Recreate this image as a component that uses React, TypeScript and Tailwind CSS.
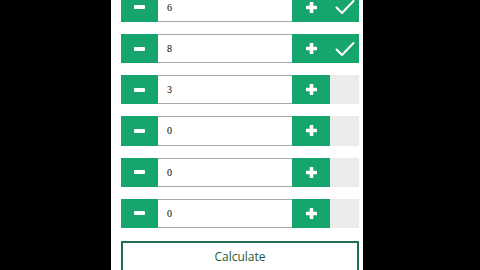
import { useState } from "react";

const green = "bg-[#17a56e]";

function MinusIcon() {
  return <span className="block h-[4px] w-[11px] rounded-[1px] bg-white" />;
}

function PlusIcon() {
  return (
    <svg width="11" height="11" viewBox="0 0 11 11">
      <rect x="3.7" y="0" width="3.6" height="11" rx="0.6" fill="white" />
      <rect x="0" y="3.7" width="11" height="3.6" rx="0.6" fill="white" />
    </svg>
  );
}

function CheckIcon() {
  return (
    <svg width="20" height="16" viewBox="0 0 20 16" fill="none">
      <path d="M1.5 8.5 L7 14 L18.5 2" stroke="white" strokeWidth="2" strokeLinecap="round" strokeLinejoin="round" />
    </svg>
  );
}

function CounterRow({
  value,
  done,
  onMinus,
  onPlus,
  className,
}: {
  value: number;
  done: boolean;
  onMinus: () => void;
  onPlus: () => void;
  className?: string;
}) {
  return (
    <div className={`flex h-[29.2px] shrink-0 ${className ?? ""}`}>
      <button
        onClick={onMinus}
        className={`flex w-[37px] shrink-0 items-center justify-center ${green}`}
      >
        <MinusIcon />
      </button>
      <div className="flex w-[134px] shrink-0 items-center border-y border-[#a9a9a9] bg-white pl-[9px] text-[10px] text-black [font-family:'Liberation_Serif',serif]">
        {value}
      </div>
      <button
        onClick={onPlus}
        className={`flex w-[38px] shrink-0 items-center justify-center ${green}`}
      >
        <PlusIcon />
      </button>
      <div
        className={`flex w-[29px] shrink-0 items-center justify-center ${
          done ? green : "bg-[#ececec]"
        }`}
      >
        {done && <CheckIcon />}
      </div>
    </div>
  );
}

export default function App() {
  const [values, setValues] = useState([6, 8, 3, 0, 0, 0]);
  const done = [true, true, false, false, false, false];

  const change = (index: number, delta: number) =>
    setValues((prev) => prev.map((v, i) => (i === index ? Math.max(0, v + delta) : v)));

  return (
    <div className="flex h-[270px] w-[480px] overflow-hidden bg-black">
      <div className="ml-[111px] flex w-[252px] flex-col gap-[12px] bg-white pl-[10px] pr-[4px]">
        {values.map((value, i) => (
          <CounterRow
            key={i}
            value={value}
            done={done[i]}
            onMinus={() => change(i, -1)}
            onPlus={() => change(i, 1)}
            className={i === 0 ? "mt-[-7.2px]" : ""}
          />
        ))}
        <button className="mt-[0.7px] h-[32px] shrink-0 border-2 border-[#1f6e4e] bg-white text-[12px] text-[#1e5b37] [font-family:'Open_Sans',sans-serif]">
          Calculate
        </button>
      </div>
    </div>
  );
}
